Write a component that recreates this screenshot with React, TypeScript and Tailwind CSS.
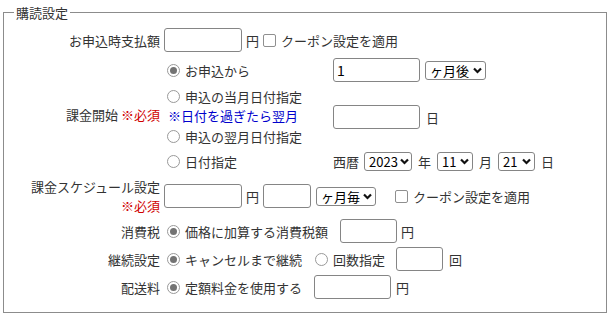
import React from "react";

const Input = ({ w, value }: { w: string; value?: string }) => (
  <span
    className={`inline-flex h-6 items-center rounded-[3px] border border-[#858585] bg-white px-[3px] text-[14px] text-black ${w}`}
  >
    {value}
  </span>
);

const Select = ({ w, label }: { w: string; label: string }) => (
  <span
    className={`inline-flex h-[19px] items-center justify-between whitespace-nowrap rounded-[3px] border border-[#858585] bg-white pr-[3px] pl-[4px] text-[13px] leading-none text-black ${w}`}
  >
    {label}
    <svg width="9" height="7" viewBox="0 0 9 7" className="ml-[2px] shrink-0">
      <path d="M1 1.5 L4.5 5 L8 1.5" fill="none" stroke="#111" strokeWidth="2.2" />
    </svg>
  </span>
);

const Radio = ({ on }: { on?: boolean }) => (
  <span className="mr-[5px] ml-[5px] inline-flex h-[13px] w-[13px] shrink-0 items-center justify-center rounded-full border border-[#999] bg-white">
    {on && <span className="h-[7px] w-[7px] rounded-full bg-[#737373]" />}
  </span>
);

const Check = () => (
  <span className="mr-[5px] inline-block h-[13px] w-[13px] shrink-0 rounded-[2px] border border-[#8f8f8f] bg-white" />
);

const Label = ({ children, h }: { children: React.ReactNode; h: string }) => (
  <div className={`flex w-[158px] shrink-0 flex-col items-end justify-center pr-[2px] text-right ${h}`}>
    {children}
  </div>
);

const Req = () => <span className="text-[#d00000]">※必須</span>;

export default function App() {
  return (
    <div className="h-[316px] w-[610px] bg-white pt-[4px] font-['Meiryo','Noto_Sans_CJK_JP',sans-serif] text-[13px] leading-[17px] text-[#333]">
      <fieldset className="mx-[3px] h-[309px] border border-[#8c8c8c] pt-[5px]">
        <legend className="ml-[10px] px-[2px] text-[#333]">購読設定</legend>

        <div className="flex h-[28px] items-center">
          <Label h="h-[28px]">お申込時支払額</Label>
          <div className="flex items-center pl-[2px]">
            <Input w="w-[78px]" />
            <span className="ml-[4px] mr-[4px]">円</span>
            <Check />
            <span>クーポン設定を適用</span>
          </div>
        </div>

        <div className="flex">
          <Label h="h-[121px]">
            <span>
              課金開始 <Req />
            </span>
          </Label>
          <div className="flex flex-col pt-[2px]">
            <div className="flex h-[28px] items-center">
              <div className="flex w-[171px] items-center">
                <Radio on />
                <span>お申込から</span>
              </div>
              <Input w="w-[87px]" value="1" />
              <span className="ml-[5px]">
                <Select w="w-[61px]" label="ヶ月後" />
              </span>
            </div>
            <div className="flex h-[66px] items-center">
              <div className="flex w-[171px] flex-col">
                <div className="flex h-[18px] items-center">
                  <Radio />
                  <span>申込の当月日付指定</span>
                </div>
                <div className="flex h-[20px] items-center pl-[6px] text-[#0000cc]">※日付を過ぎたら翌月</div>
                <div className="flex h-[22px] items-center">
                  <Radio />
                  <span>申込の翌月日付指定</span>
                </div>
              </div>
              <Input w="w-[87px]" />
              <span className="ml-[6px]">日</span>
            </div>
            <div className="flex h-[22px] items-center">
              <div className="flex w-[171px] items-center">
                <Radio />
                <span>日付指定</span>
              </div>
              <span className="mr-[5px]">西暦</span>
              <Select w="w-[48px]" label="2023" />
              <span className="mx-[6px]">年</span>
              <Select w="w-[36px]" label="11" />
              <span className="mx-[6px]">月</span>
              <Select w="w-[37px]" label="21" />
              <span className="ml-[6px]">日</span>
            </div>
          </div>
        </div>

        <div className="flex h-[42px] items-center">
          <Label h="h-[42px]">
            <span className="leading-[19px]">課金スケジュール設定</span>
            <span className="leading-[19px]">
              <Req />
            </span>
          </Label>
          <div className="flex items-center pl-[2px]">
            <Input w="w-[78px]" />
            <span className="mx-[4px]">円</span>
            <Input w="w-[48px]" />
            <span className="ml-[5px] mr-[19px]">
              <Select w="w-[60px]" label="ヶ月毎" />
            </span>
            <Check />
            <span>クーポン設定を適用</span>
          </div>
        </div>

        <div className="flex h-[28px] items-center">
          <Label h="h-[28px]">消費税</Label>
          <div className="flex items-center">
            <Radio on />
            <span className="mr-[12px]">価格に加算する消費税額</span>
            <Input w="w-[57px]" />
            <span className="ml-[4px]">円</span>
          </div>
        </div>

        <div className="flex h-[28px] items-center">
          <Label h="h-[28px]">継続設定</Label>
          <div className="flex items-center">
            <Radio on />
            <span className="mr-[8px]">キャンセルまで継続</span>
            <Radio />
            <span className="mr-[11px]">回数指定</span>
            <Input w="w-[47px]" />
            <span className="ml-[6px]">回</span>
          </div>
        </div>

        <div className="flex h-[28px] items-center">
          <Label h="h-[28px]">配送料</Label>
          <div className="flex items-center">
            <Radio on />
            <span className="mr-[12px]">定額料金を使用する</span>
            <Input w="w-[77px]" />
            <span className="ml-[5px]">円</span>
          </div>
        </div>
      </fieldset>
    </div>
  );
}
